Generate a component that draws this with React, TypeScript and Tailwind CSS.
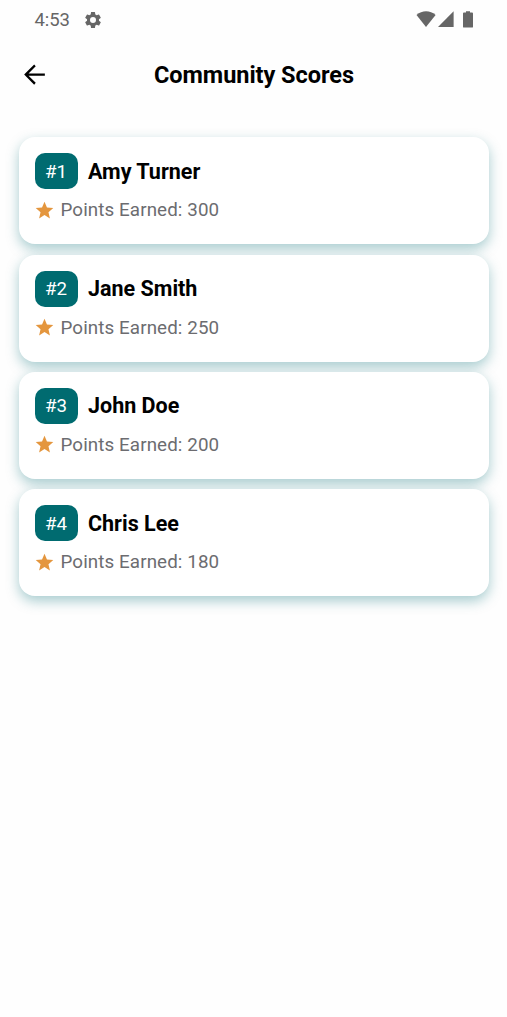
const scores = [
  { name: 'Amy Turner', points: 300 },
  { name: 'Jane Smith', points: 250 },
  { name: 'John Doe', points: 200 },
  { name: 'Chris Lee', points: 180 },
];

function StatusBar() {
  return (
    <div className="flex h-10 items-center pl-[34.5px] pr-[32.6px] text-[#666666]">
      <span className="text-[18.5px] leading-5 tracking-[-0.1px]">4:53</span>
      <svg className="ml-[13.7px] size-5" viewBox="0 0 24 24" fill="currentColor">
        <path d="M19.14 12.94c.04-.3.06-.61.06-.94 0-.32-.02-.64-.07-.94l2.03-1.58a.49.49 0 0 0 .12-.61l-1.92-3.32a.49.49 0 0 0-.59-.22l-2.39.96c-.5-.38-1.03-.7-1.62-.94l-.36-2.54a.48.48 0 0 0-.48-.41h-3.84c-.24 0-.43.17-.47.41l-.36 2.54c-.59.24-1.13.57-1.62.94l-2.39-.96a.48.48 0 0 0-.59.22L2.74 8.87c-.12.21-.08.47.12.61l2.03 1.58c-.05.3-.09.63-.09.94s.02.64.07.94l-2.03 1.58a.49.49 0 0 0-.12.61l1.92 3.32c.12.22.37.29.59.22l2.39-.96c.5.38 1.03.7 1.62.94l.36 2.54c.05.24.24.41.48.41h3.84c.24 0 .44-.17.47-.41l.36-2.54c.59-.24 1.13-.56 1.62-.94l2.39.96c.22.08.47 0 .59-.22l1.92-3.32a.48.48 0 0 0-.12-.61l-2.01-1.58zM12 15.6A3.6 3.6 0 1 1 12 8.4a3.6 3.6 0 0 1 0 7.2z" />
      </svg>
      <div className="ml-auto flex items-center">
        <svg className="h-5 w-[62px]" viewBox="0 0 62 20" fill="currentColor">
          <path d="M4.5 5.1C10.1 .1 18.1 .1 23.6 5.1L14 17Z" />
          <path d="M41.6 1.3V17H26Z" />
          <path d="M54 1.2h4v1.4h2.1q.9 0 .9.9v13.2q0 .9-.9.9h-8.2q-.9 0-.9-.9V3.5q0-.9.9-.9H54z" />
        </svg>
      </div>
    </div>
  );
}

function Header() {
  return (
    <header className="grid h-[70px] grid-cols-[1fr_auto_1fr] items-center pl-[21.5px] pr-[20.5px]">
      <button type="button" aria-label="Back" className="-ml-[0.5px] -mt-px size-[27px]">
        <svg className="size-[27px]" viewBox="0 0 24 24" fill="#000">
          <path d="M21.2 11H6.7l6.4-6.4L11.7 3 2.8 12l8.9 9 1.4-1.6L6.7 13h14.5z" />
        </svg>
      </button>
      <h1 className="text-[23.5px] font-bold leading-7 tracking-[-0.04px] text-black">Community Scores</h1>
    </header>
  );
}

function ScoreCard({ rank, name, points }: { rank: number; name: string; points: number }) {
  return (
    <li className="h-[107px] rounded-2xl bg-white px-4 pt-4 shadow-[0_5px_13px_rgba(0,109,117,0.35)]">
      <div className="flex items-center gap-[10.5px]">
        <span className="flex h-9 w-[43px] items-center justify-center rounded-[10px] bg-[#006b70] pt-px text-[18.7px] leading-7 text-white">
          #{rank}
        </span>
        <span className="pt-px text-[21.5px] font-bold leading-7 text-black">{name}</span>
      </div>
      <div className="mt-[9px] flex items-center gap-[5.2px]">
        <svg className="-ml-[0.2px] size-[21px]" viewBox="0 0 24 24" fill="#e4963e">
          <path d="M12 17.27 18.18 21l-1.64-7.03L22 9.24l-7.19-.61L12 2 9.19 8.63 2 9.24l5.46 4.73L5.82 21z" />
        </svg>
        <span className="text-[18.8px] leading-6 tracking-[0.1px] text-[#6c6c70]">Points Earned: {points}</span>
      </div>
    </li>
  );
}

export default function App() {
  return (
    <div className="min-h-[1017px] bg-[#fefefe] font-['Roboto',sans-serif]">
      <StatusBar />
      <Header />
      <ul className="flex flex-col gap-[10.3px] px-[18.5px] pt-[27.4px]">
        {scores.map((s, i) => (
          <ScoreCard key={s.name} rank={i + 1} name={s.name} points={s.points} />
        ))}
      </ul>
    </div>
  );
}
